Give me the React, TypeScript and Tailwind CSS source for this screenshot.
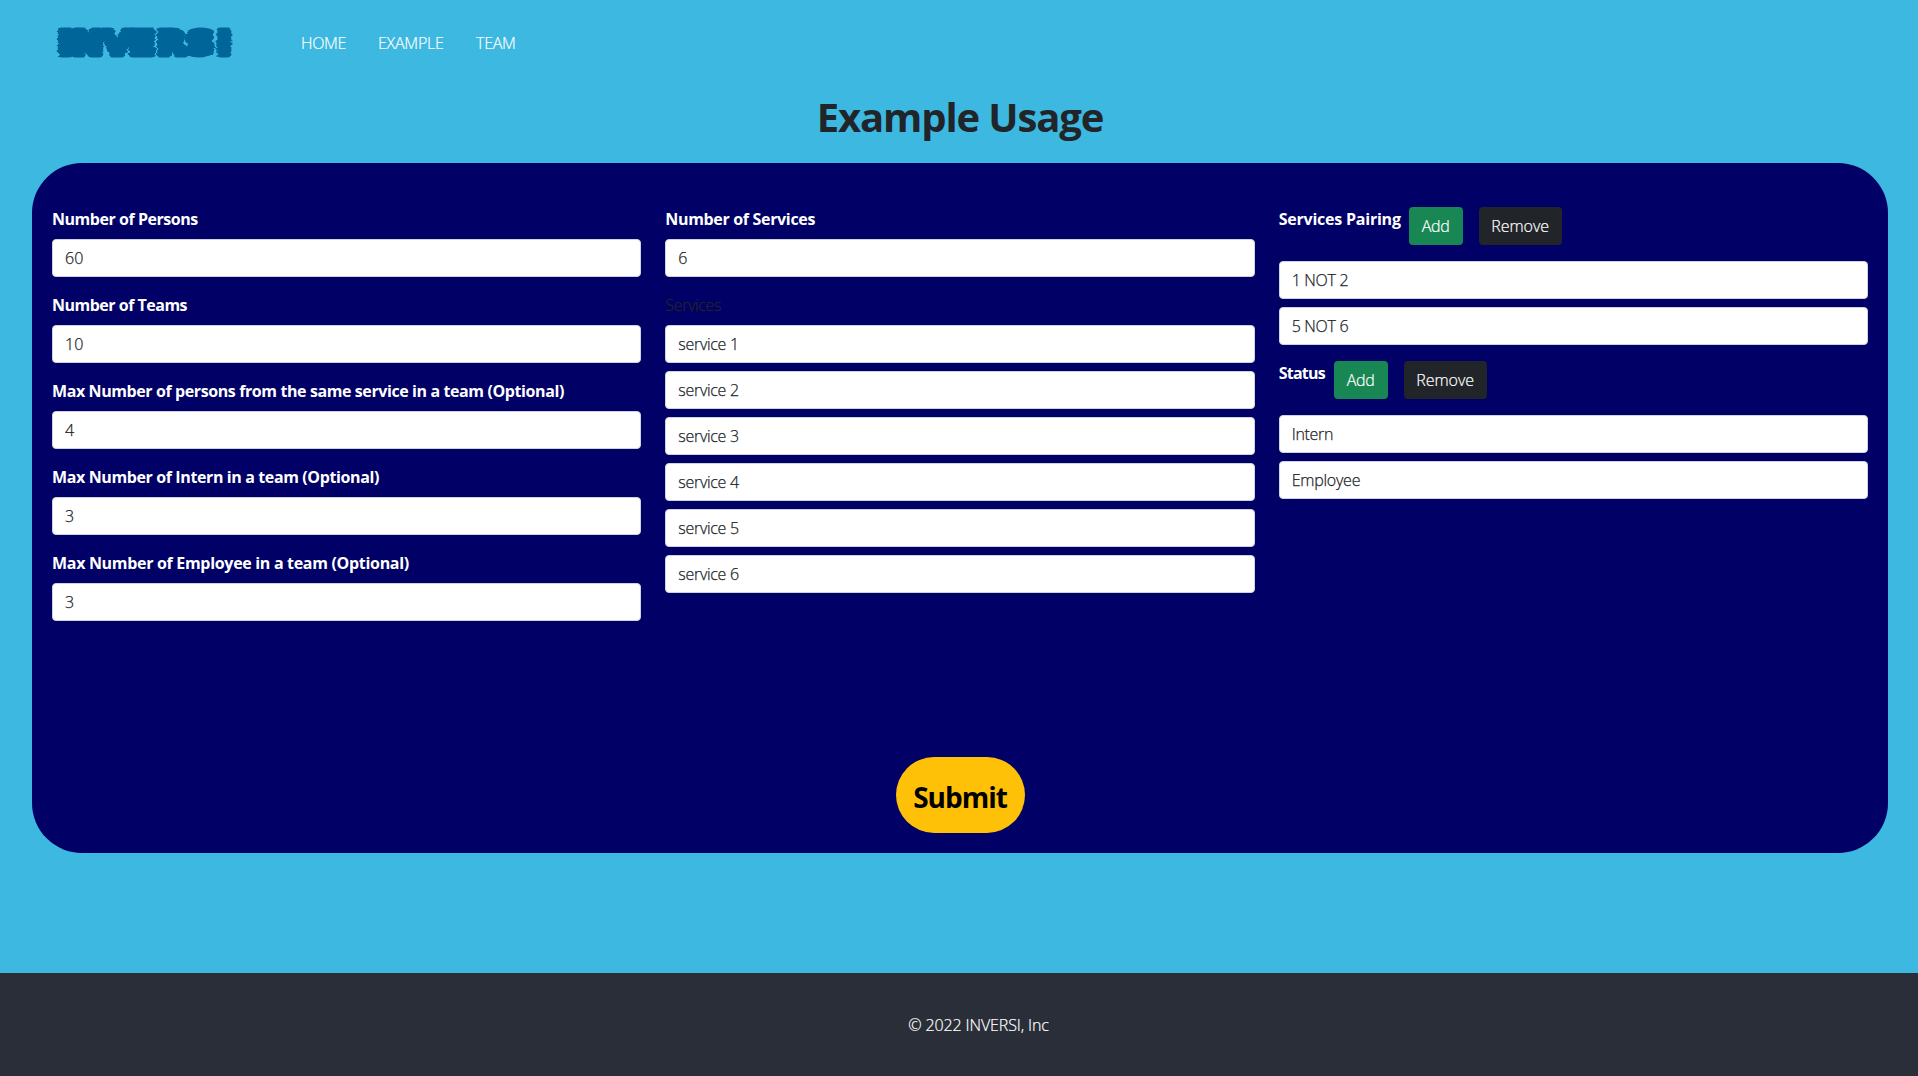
import type { ReactNode } from 'react';

function Label({ children, tracking = 'tracking-[-0.4px]' }: { children: ReactNode; tracking?: string }) {
  return <label className={`block h-6 whitespace-nowrap font-bold text-white ${tracking}`}>{children}</label>;
}

function Field({ value, tracking = 'tracking-[-0.3px]' }: { value: string; tracking?: string }) {
  return (
    <input
      type="text"
      defaultValue={value}
      className={`block h-[38px] w-full rounded border border-[#ced4da] bg-white px-3 text-base font-light text-[#212529] outline-none [-webkit-text-stroke:0.25px_#212529] ${tracking}`}
    />
  );
}

function PairHeader({ title, tracking, width }: { title: string; tracking: string; width: string }) {
  return (
    <div className="mb-4 flex h-[38px] items-start">
      <div className={width}>
        <Label tracking={tracking}>{title}</Label>
      </div>
      <button className="mr-4 h-[38px] w-[54px] rounded bg-[#198754] font-light tracking-[-0.2px] text-white [-webkit-text-stroke:0.2px_#fff]">
        Add
      </button>
      <button className="h-[38px] w-[83px] rounded bg-[#212529] font-light text-white [-webkit-text-stroke:0.2px_#fff]">
        Remove
      </button>
    </div>
  );
}

function Logo() {
  return (
    <svg width="184" height="44" viewBox="0 0 184 44" className="block overflow-visible" aria-label="INVERSI">
      <defs>
        <filter id="glitch" x="-5%" y="-10%" width="110%" height="120%" colorInterpolationFilters="sRGB">
          <feTurbulence type="fractalNoise" baseFrequency="0.04 0.4" numOctaves="2" seed="7" />
          <feColorMatrix values="1 0 0 0 0  0 0 0 0 0.5  0 0 0 0 0.5  0 0 0 0 1" result="noise" />
          <feDisplacementMap in="SourceGraphic" in2="noise" scale="6" xChannelSelector="R" yChannelSelector="G" />
        </filter>
      </defs>
      <g filter="url(#glitch)">
        <text
          transform="scale(1.15 1)"
          x="4.8 16.2 43.5 66.6 91.2 116.6 142.6"
          y="33"
          fill="#006699"
          stroke="#006699"
          strokeWidth="7"
          strokeLinejoin="round"
          fontFamily="'DejaVu Sans', sans-serif"
          fontWeight="700"
          fontSize="32"
        >
          INVERSI
        </text>
      </g>
    </svg>
  );
}

const limits = [
  { label: 'Number of Persons', value: '60', tracking: 'tracking-[-0.46px]' },
  { label: 'Number of Teams', value: '10', tracking: 'tracking-[-0.5px]' },
  { label: 'Max Number of persons from the same service in a team (Optional)', value: '4', tracking: 'tracking-[-0.4px]' },
  { label: 'Max Number of Intern in a team (Optional)', value: '3', tracking: 'tracking-[-0.38px]' },
  { label: 'Max Number of Employee in a team (Optional)', value: '3', tracking: 'tracking-[-0.31px]' },
];

const services = ['service 1', 'service 2', 'service 3', 'service 4', 'service 5', 'service 6'];

export default function App() {
  return (
    <div className="flex h-[1076px] flex-col overflow-hidden bg-[#3cb8e1] font-['Open_Sans',sans-serif] text-base leading-6 text-[#212529]">
      <header className="flex h-[86px] shrink-0 items-center pl-[53px]">
        <Logo />
        <nav className="ml-16 flex gap-8 text-base font-light text-white [-webkit-text-stroke:0.2px_#fff]">
          <a className="w-[45px] tracking-[-0.35px]">HOME</a>
          <a className="w-[66px] tracking-[-0.24px]">EXAMPLE</a>
          <a className="tracking-[-0.25px]">TEAM</a>
        </nav>
      </header>

      <h1 className="h-[77px] shrink-0 pt-[7px] text-center text-[40px] leading-[48px] font-bold tracking-[-1.1px]">
        <span className="pl-0.5">Example Usage</span>
      </h1>

      <main className="mr-[30px] ml-8 flex h-[690px] shrink-0 flex-col rounded-[50px] bg-[#000066] px-5 pt-11 pb-5">
        <div className="grid grid-cols-3 gap-6">
          <div className="flex flex-col gap-4">
            {limits.map((item) => (
              <div key={item.label} className="flex flex-col gap-2">
                <Label tracking={item.tracking}>{item.label}</Label>
                <Field value={item.value} tracking="tracking-normal" />
              </div>
            ))}
          </div>

          <div className="flex flex-col gap-4">
            <div className="flex flex-col gap-2">
              <Label tracking="tracking-[-0.33px]">Number of Services</Label>
              <Field value="6" />
            </div>
            <div className="flex flex-col gap-2">
              <span className="font-light tracking-[-0.35px] [-webkit-text-stroke:0.25px_#212529]">Services</span>
              {services.map((name) => (
                <Field key={name} value={name} />
              ))}
            </div>
          </div>

          <div>
            <PairHeader title="Services Pairing" tracking="tracking-[-0.22px]" width="w-[130px]" />
            <div className="mb-4 flex flex-col gap-2">
              <Field value="1 NOT 2" />
              <Field value="5 NOT 6" />
            </div>
            <PairHeader title="Status" tracking="tracking-[-0.75px]" width="w-[55px]" />
            <div className="flex flex-col gap-2">
              <Field value="Intern" />
              <Field value="Employee" tracking="tracking-[-0.23px]" />
            </div>
          </div>
        </div>

        <button className="mt-auto h-[76px] w-[129px] self-center rounded-[38px] bg-[#ffc107] pt-1 text-[28px] font-bold tracking-[-1px] text-black">
          Submit
        </button>
      </main>

      <footer className="mt-auto flex h-[103px] shrink-0 items-center justify-center bg-[#292e38] pl-[39px] font-light tracking-[-0.12px] text-white [-webkit-text-stroke:0.2px_#fff]">
        © 2022 INVERSI, Inc
      </footer>
    </div>
  );
}
